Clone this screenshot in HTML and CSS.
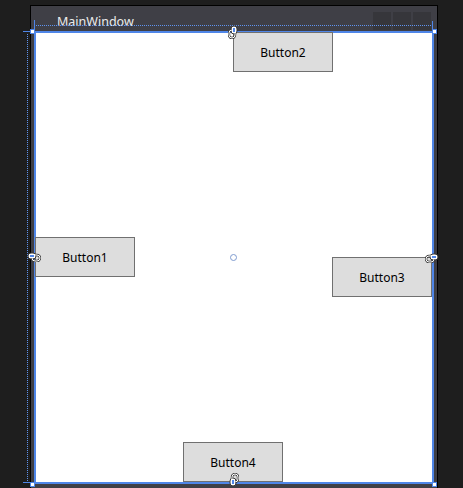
FILE: index.html
```html
<!DOCTYPE html>
<html>
<head>
<meta charset="utf-8">
<link rel="stylesheet" href="styles.css">
</head>
<body>
<div class="window">
  <div class="titlebar">
    <span class="title">MainWindow</span>
    <div class="caption-btns"><i></i><i></i><i></i></div>
  </div>
  <div class="surface">
    <div class="btn b1">Button1</div>
    <div class="btn b2">Button2</div>
    <div class="btn b3">Button3</div>
    <div class="btn b4">Button4</div>
    <span class="center-dot"></span>
  </div>
</div>

<span class="dots-h"></span>
<span class="dots-v"></span>
<span class="ext ext-tl-v"></span>
<span class="ext ext-tl-h"></span>
<span class="ext ext-tr-v"></span>
<span class="ext ext-bl-h"></span>
<span class="handle h-tl"></span>
<span class="handle h-tr"></span>
<span class="handle h-bl"></span>
<span class="handle h-br"></span>

<svg class="anchor a-left" viewBox="0 0 14 10" width="14" height="10"><rect x="1" y="1" width="8" height="6" rx="3" fill="#fff" stroke="#3a3a3a"/><rect x="5" y="3" width="8" height="6" rx="3" fill="none" stroke="#3a3a3a" stroke-width="2.4"/><rect x="5" y="3" width="8" height="6" rx="3" fill="none" stroke="#fff"/><rect x="2.5" y="2.5" width="5" height="3" fill="#4f86e8" stroke="#fff"/></svg>
<svg class="anchor a-right" viewBox="0 0 14 10" width="14" height="10"><rect x="1" y="1" width="8" height="6" rx="3" fill="#fff" stroke="#3a3a3a"/><rect x="5" y="3" width="8" height="6" rx="3" fill="none" stroke="#3a3a3a" stroke-width="2.4"/><rect x="5" y="3" width="8" height="6" rx="3" fill="none" stroke="#fff"/><rect x="2.5" y="2.5" width="5" height="3" fill="#4f86e8" stroke="#fff"/></svg>
<svg class="anchor a-top" viewBox="0 0 14 10" width="14" height="10"><rect x="1" y="1" width="8" height="6" rx="3" fill="#fff" stroke="#3a3a3a"/><rect x="5" y="3" width="8" height="6" rx="3" fill="none" stroke="#3a3a3a" stroke-width="2.4"/><rect x="5" y="3" width="8" height="6" rx="3" fill="none" stroke="#fff"/><rect x="2.5" y="2.5" width="5" height="3" fill="#4f86e8" stroke="#fff"/></svg>
<svg class="anchor a-bottom" viewBox="0 0 14 10" width="14" height="10"><rect x="1" y="1" width="8" height="6" rx="3" fill="#fff" stroke="#3a3a3a"/><rect x="5" y="3" width="8" height="6" rx="3" fill="none" stroke="#3a3a3a" stroke-width="2.4"/><rect x="5" y="3" width="8" height="6" rx="3" fill="none" stroke="#fff"/><rect x="2.5" y="2.5" width="5" height="3" fill="#4f86e8" stroke="#fff"/></svg>
</body>
</html>
```
FILE: styles.css
```css
html, body {
  margin: 0;
  padding: 0;
  height: 100%;
  overflow: hidden;
}
body {
  position: relative;
  background: #1e1e1e;
  font-family: "Noto Sans", "Open Sans", sans-serif;
  padding: 5px 0 0 30px;
  box-sizing: border-box;
}
.window {
  width: 408px;
  height: 500px;
  box-sizing: border-box;
  border: 1px solid #000;
  border-bottom: none;
  background: #3f3f46;
  padding: 0 3px;
  display: flex;
  flex-direction: column;
}
.titlebar {
  height: 25px;
  display: flex;
  justify-content: space-between;
  align-items: flex-start;
  flex: none;
}
.title {
  margin-left: 23px;
  margin-top: 8px;
  font-size: 12.5px;
  line-height: 16px;
  color: #ececec;
}
.caption-btns {
  display: flex;
  gap: 2px;
  margin-top: 6px;
  margin-right: 3px;
}
.caption-btns i {
  width: 18px;
  height: 18px;
  background: #36363b;
}
.surface {
  position: relative;
  width: 400px;
  height: 453px;
  box-sizing: border-box;
  border: 2px solid #4f86e8;
  background: #fff;
  flex: none;
}
.btn {
  position: absolute;
  width: 100px;
  height: 40px;
  box-sizing: border-box;
  background: #dddddd;
  border: 1px solid #707070;
  display: flex;
  align-items: center;
  justify-content: center;
  font-size: 12px;
  color: #000;
}
.b1 { left: -1px; top: 204px; }
.b2 { left: 197px; top: -1px; }
.b3 { right: 0; top: 224px; }
.b4 { left: 147px; bottom: 0; }
.center-dot {
  position: absolute;
  left: 194px;
  top: 221px;
  width: 7px;
  height: 7px;
  box-sizing: border-box;
  border: 1.5px solid #7f9cd0;
  border-radius: 50%;
}
.dots-h {
  position: absolute;
  left: 36px;
  top: 25px;
  width: 397px;
  height: 1px;
  background: repeating-linear-gradient(to right, #5f93ef 0 1px, transparent 1px 2px);
}
.dots-v {
  position: absolute;
  left: 27px;
  top: 34px;
  width: 1px;
  height: 449px;
  background: repeating-linear-gradient(to bottom, #5f93ef 0 1px, transparent 1px 2px);
}
.ext {
  position: absolute;
  background: #4f86e8;
}
.ext-tl-v { left: 34px; top: 20px; width: 1px; height: 12px; }
.ext-tl-h { left: 23px; top: 31px; width: 12px; height: 1px; }
.ext-tr-v { left: 432px; top: 21px; width: 1px; height: 11px; }
.ext-bl-h { left: 23px; top: 482px; width: 12px; height: 1px; }
.handle {
  position: absolute;
  width: 5px;
  height: 5px;
  box-sizing: border-box;
  background: #fff;
  border: 1px solid #4f86e8;
}
.h-tl { left: 30px; top: 29px; }
.h-tr { left: 432px; top: 29px; }
.h-bl { left: 30px; top: 482px; }
.h-br { left: 432px; top: 482px; }
.anchor {
  position: absolute;
  display: block;
}
.a-left { left: 27px; top: 252px; }
.a-right { left: 425px; top: 253px; transform: scaleX(-1); }
.a-top { left: 226px; top: 27px; transform: rotate(90deg); }
.a-bottom { left: 227px; top: 475px; transform: rotate(-90deg); }
```
